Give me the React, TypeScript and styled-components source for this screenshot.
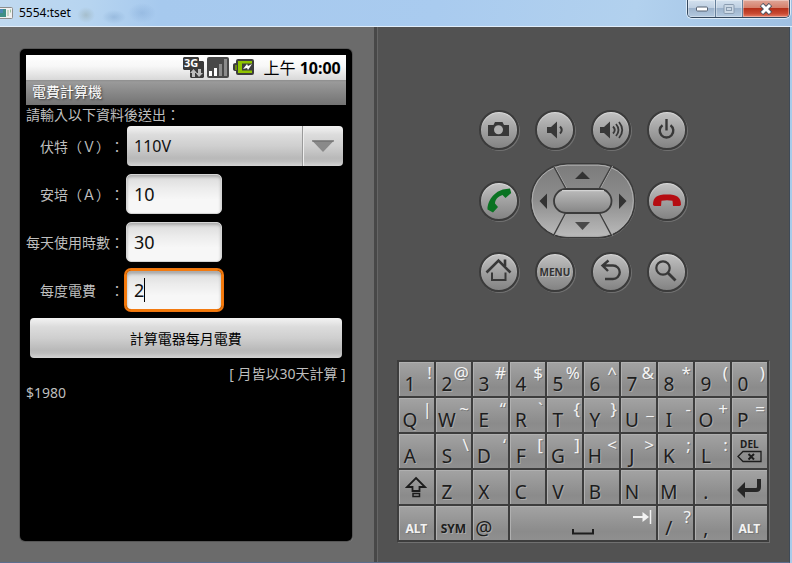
import React, { useState } from "react";
import styled, { createGlobalStyle, css } from "styled-components";

const GlobalStyle = createGlobalStyle`
  * { box-sizing: border-box; }
  body { margin: 0; background: #525252; }
  body, button, input, select {
    font-family: "Noto Sans", "Noto Sans CJK TC", sans-serif;
  }
`;

const Window = styled.div`
  min-height: 100vh;
  display: flex;
  flex-direction: column;
  background: #a9cbea;
`;

const TitleBar = styled.header`
  height: 27px;
  display: flex;
  align-items: flex-start;
  justify-content: space-between;
  border-bottom: 1px solid #e2eefa;
  background:
    radial-gradient(ellipse 9px 8px at 86px 15px, rgba(134, 150, 140, 0.35), transparent),
    radial-gradient(ellipse 12px 7px at 114px 17px, rgba(100, 140, 185, 0.3), transparent),
    radial-gradient(ellipse 14px 10px at 142px 13px, rgba(110, 150, 200, 0.3), transparent),
    linear-gradient(100deg, #c0d9f0 0, #b6d4f0 90px, #a6c9ee 160px, #a9cbef 55%, #b2d1ee 80%, #9fc0e2 100%);
`;

const TitleGroup = styled.div`
  display: flex;
  align-items: center;
  gap: 6px;
  height: 26px;
`;

const Title = styled.h1`
  margin: 0;
  font-size: 12px;
  font-weight: 400;
  line-height: 18px;
  color: #000;
`;

const Controls = styled.div`
  display: flex;
  height: 18px;
  margin-right: 2px;
  border: 1px solid #34485e;
  border-top: 0;
  border-radius: 0 0 5px 5px;
  box-shadow: 0 0 0 1px rgba(240, 248, 255, 0.75);
  overflow: hidden;
`;

const ControlButton = styled.button<{ $close?: boolean }>`
  width: ${(p) => (p.$close ? 47 : 27)}px;
  padding: 0;
  border: 0;
  border-left: 1px solid #66809b;
  display: flex;
  align-items: center;
  justify-content: center;
  background: ${(p) =>
    p.$close
      ? "linear-gradient(#e0a698 0, #d5806c 45%, #b5301a 50%, #c94a32 80%, #e8806a 100%)"
      : "linear-gradient(#d3e1ef 0, #bfd0e2 45%, #9db3cc 50%, #b3c9df 100%)"};
  box-shadow: inset 0 0 0 1px rgba(255, 255, 255, 0.35);
  &:first-child { border-left: 0; }
`;

const Body = styled.main`
  flex: 1;
  display: grid;
  grid-template-columns: 9fr 10fr;
  margin-right: 2px;
  border-bottom: 1px solid #5d6d8c;
  border-right: 1px solid #3f4a57;
`;

const ScreenPanel = styled.section`
  display: flex;
  padding: 22px 22px 21px 20px;
  background: #6b6b6b;
`;

const Bezel = styled.div`
  flex: 1;
  padding: 6px;
  background: #000;
  border-radius: 5px;
  box-shadow: 0 0 0 1px #565656, 1px 1px 0 0 #8a8a8a;
`;

const StatusBar = styled.div`
  height: 25px;
  display: flex;
  align-items: center;
  justify-content: flex-end;
  gap: 8px;
  padding-right: 5px;
  background: linear-gradient(#fff, #f7f7f7 45%, #d8d8d8);
`;

const Clock = styled.time`
  font-size: 16px;
  line-height: 24px;
  font-weight: 700;
  color: #000;
  white-space: pre;
  span { font-weight: 400; }
`;

const AppTitle = styled.h2`
  height: 25px;
  margin: 0;
  padding-left: 6px;
  font-size: 14px;
  font-weight: 400;
  line-height: 23px;
  color: #fff;
  text-shadow: 1px 1px 2px #333;
  background: linear-gradient(#8e8e8e, #9a9a9a 8%, #737373);
`;

const Form = styled.form`
  display: flex;
  flex-direction: column;
  gap: 8px;
  color: #bebebe;
  font-size: 14px;
  text-spacing-trim: space-all;
`;

const Prompt = styled.p`
  margin: 0 0 -7px;
  line-height: 20px;
`;

const Field = styled.div`
  height: 40px;
  display: grid;
  grid-template-columns: 100px 1fr;
  align-items: center;
`;

const Label = styled.label`
  padding-top: 2px;
  white-space: pre;
  line-height: 20px;
`;

const metal = css`
  background: linear-gradient(#f3f3f3 0, #dcdcdc 22%, #cfcfcf 50%, #b9b9b9 80%, #bdbdbd 88%, #d4d4d4 100%);
`;

const SelectBox = styled.div`
  display: flex;
  height: 40px;
  margin: 0 3px 0 1px;
  border-radius: 4px;
  position: relative;
  ${metal}
`;

const Select = styled.select`
  appearance: none;
  flex: 1;
  min-width: 0;
  padding: 0 48px 0 7px;
  border: 0;
  background: transparent;
  font-size: 16px;
  color: #111;
`;

const SelectArrow = styled.span`
  position: absolute;
  inset: 0 0 0 auto;
  width: 41px;
  display: flex;
  align-items: center;
  justify-content: center;
  border-left: 1px solid #9a9a9a;
  box-shadow: inset 1px 0 0 #eee;
  pointer-events: none;
`;

const InputBox = styled.div`
  position: relative;
  width: 96px;
  height: 40px;
`;

const Input = styled.input<{ $active?: boolean }>`
  width: 100%;
  height: 100%;
  padding: 0 7px;
  border: 1px solid #d4d4d4;
  border-radius: 5px;
  font-size: 18px;
  color: #111;
  outline: 0;
  caret-color: transparent;
  background: linear-gradient(#dadada, #ececec 35%, #f7f7f7 65%);
  box-shadow: inset 0 2px 3px #aaa;
  ${(p) =>
    p.$active &&
    css`
      border-color: #f27a10;
      box-shadow: inset 0 3px 3px #aaa, 0 0 0 1px #f57c08, 0 0 0 2px #ee7410;
    `}
`;

const Caret = styled.span`
  position: absolute;
  left: 18px;
  top: 8px;
  width: 1px;
  height: 24px;
  background: #000;
`;

const Submit = styled.button`
  height: 40px;
  margin: 0 4px;
  border: 0;
  border-radius: 4px;
  font-size: 14px;
  color: #000;
  ${metal}
`;

const Note = styled.p`
  margin: -2px 0 0;
  line-height: 19px;
  text-align: right;
`;

const Result = styled.output`
  display: block;
  margin-top: -8px;
  line-height: 19px;
`;

const ControlPanel = styled.section`
  display: flex;
  flex-direction: column;
  align-items: center;
  gap: 68px;
  padding: 83px 4px 20px;
  background: #525252;
  border-left: 3px solid #484848;
  box-shadow: inset 1px 0 0 #666;
`;

const Pad = styled.div`
  width: 208px;
  display: flex;
  flex-direction: column;
  gap: 13px;
`;

const PadRow = styled.div`
  display: flex;
  align-items: center;
  justify-content: space-between;
`;

const RoundButton = styled.button`
  width: 40px;
  height: 40px;
  padding: 0;
  border: 2px solid #3b3b3b;
  border-radius: 50%;
  display: flex;
  align-items: center;
  justify-content: center;
  background: linear-gradient(#c2c2c2, #a4a4a4 45%, #838383);
  box-shadow: inset 0 1px 1px #dcdcdc, 1px 1px 0 #717171;
  font-size: 10px;
  font-weight: 700;
  line-height: 12px;
  color: #333;
  svg { flex: none; display: block; }
`;

const MenuText = styled.span`
  text-shadow: 1px 1px 0 #bbb;
`;

const DPadBox = styled.div`
  position: relative;
  width: 106px;
  height: 76px;
  svg { display: block; }
`;

const DPadKeys = styled.div`
  position: absolute;
  inset: 0;
  display: grid;
  grid-template: "l u r" 1fr "l c r" 1fr "l d r" 1fr / 24px 1fr 24px;
`;

const DPadKey = styled.button<{ $area: string }>`
  grid-area: ${(p) => p.$area};
  padding: 0;
  border: 0;
  background: transparent;
`;

const Keyboard = styled.div`
  width: 100%;
  max-width: 372px;
  display: grid;
  grid-template-columns: repeat(10, 1fr);
  grid-auto-rows: 34px;
  gap: 2px;
  padding: 2px;
  background: #3d3d3d;
  box-shadow: 1px 1px 0 #707070;
`;

const KeyButton = styled.button<{ $span?: number }>`
  grid-column: span ${(p) => p.$span ?? 1};
  position: relative;
  min-width: 0;
  padding: 0;
  border: 0;
  display: flex;
  align-items: center;
  justify-content: center;
  background: linear-gradient(#a3a3a3, #8b8b8b 75%, #8f8f8f);
  box-shadow: inset 1px 1px 0 #b0b0b0;
`;

const MainGlyph = styled.span`
  position: absolute;
  left: 0;
  bottom: 0;
  width: 22px;
  display: flex;
  justify-content: center;
  font-size: 19px;
  line-height: 24px;
  color: #1d1d1d;
  text-shadow: 1px 1px 0 #aaa;
`;

const AltGlyph = styled.span`
  position: absolute;
  right: 2px;
  top: 0;
  font-size: 17px;
  line-height: 22px;
  color: #f3f3f3;
  text-shadow: 1px 1px 0 #777;
`;

const WordGlyph = styled.span<{ $light?: boolean }>`
  padding-top: 11px;
  font-size: 12px;
  font-weight: 700;
  line-height: 16px;
  color: ${(p) => (p.$light ? "#f3f3f3" : "#1d1d1d")};
  text-shadow: 1px 1px 0 ${(p) => (p.$light ? "#777" : "#aaa")};
`;

const DelStack = styled.span`
  display: flex;
  flex-direction: column;
  align-items: center;
  font-size: 10px;
  font-weight: 700;
  line-height: 11px;
  color: #1d1d1d;
`;

const TabIcon = styled.svg`
  position: absolute;
  right: 4px;
  top: 3px;
`;

const SpaceIcon = styled.svg`
  margin-top: 18px;
`;

const Icon = ({ children }: { children: React.ReactNode }) => (
  <svg width="36" height="36" viewBox="2 2 36 36" fill="none" aria-hidden="true">
    {children}
  </svg>
);

const INK = "#383838";

const DPad = () => (
  <DPadBox>
    <svg width="106" height="76" viewBox="0 0 106 76" fill="none" aria-hidden="true">
      <defs>
        <linearGradient id="ring" x1="0" y1="0" x2="0" y2="1">
          <stop offset="0" stopColor="#7b7b7b" />
          <stop offset="0.5" stopColor="#8e8e8e" />
          <stop offset="1" stopColor="#bcbcbc" />
        </linearGradient>
        <linearGradient id="pill" x1="0" y1="0" x2="0" y2="1">
          <stop offset="0" stopColor="#bdbdbd" />
          <stop offset="1" stopColor="#858585" />
        </linearGradient>
      </defs>
      <rect x="1.5" y="1.5" width="104" height="74" rx="37" stroke="#767676" />
      <rect x="0.8" y="0.8" width="104" height="73.8" rx="36.7" fill="url(#ring)" stroke="#3b3b3b" strokeWidth="1.6" />
      <rect x="2.2" y="2.2" width="101" height="71" rx="35" stroke="#b0b0b0" />
      <path d="M24.5 3 36.5 25M82.5 3 70.5 25M36.5 50 24.5 72.5M70.5 50 82.5 72.5" stroke="#b0b0b0" />
      <path d="M23.5 3 35.5 25M81.5 3 69.5 25M35.5 50 23.5 72.5M69.5 50 81.5 72.5" stroke="#3f3f3f" strokeWidth="1.4" />
      <rect x="24" y="26" width="57.5" height="24" rx="12" fill="url(#pill)" stroke="#3b3b3b" strokeWidth="1.8" />
      <path d="M32 27.7H74" stroke="#dadada" />
      <path d="M45 16 52.5 8.5 60 16ZM17 30.5 9.5 38 17 46ZM89 30.5 96.5 38 89 46Z" fill="#333" />
      <path d="M45 59H60L52.5 67Z" fill="#4a4a4a" />
    </svg>
    <DPadKeys>
      <DPadKey $area="u" aria-label="Up" />
      <DPadKey $area="l" aria-label="Left" />
      <DPadKey $area="c" aria-label="Select" />
      <DPadKey $area="r" aria-label="Right" />
      <DPadKey $area="d" aria-label="Down" />
    </DPadKeys>
  </DPadBox>
);

type KeyDef = [string, string?];

const KEY_ROWS: KeyDef[][] = [
  [["1", "!"], ["2", "@"], ["3", "#"], ["4", "$"], ["5", "%"], ["6", "^"], ["7", "&"], ["8", "*"], ["9", "("], ["0", ")"]],
  [["Q", "|"], ["W", "~"], ["E", "“"], ["R", "`"], ["T", "{"], ["Y", "}"], ["U", "_"], ["I", "-"], ["O", "+"], ["P", "="]],
  [["A"], ["S", "\\"], ["D", "‘"], ["F", "["], ["G", "]"], ["H", "<"], ["J", ">"], ["K", ";"], ["L", ":"]],
  [["Z"], ["X"], ["C"], ["V"], ["B"], ["N"], ["M"], ["."]],
];

const Key = ({ def: [main, alt] }: { def: KeyDef }) => (
  <KeyButton>
    <MainGlyph>{main}</MainGlyph>
    {alt && <AltGlyph>{alt}</AltGlyph>}
  </KeyButton>
);

const keysOf = (row: number) => KEY_ROWS[row].map((def) => <Key key={def[0]} def={def} />);

const StatusIcons = () => (
  <svg width="72" height="22" viewBox="0 0 72 22" overflow="visible" aria-label="3G, signal, battery" role="img">
    <path d="M1 0H15L16 1V4H20L21 5V20L20 21H8L7 20V13H1L0 12V1Z" fill="#3a3a3a" />
    <text x="1" y="10" fontSize="11" fontWeight="700" fill="#fff">3G</text>
    <path d="M10.5 12 14 16H12V20H9V16H7ZM16 20 12.8 16H15V12H18V16H20Z" fill="#bdbdbd" />
    <rect x="24" y="0" width="22" height="21" rx="2" fill="#484848" />
    <path d="M26 14h3v5h-3ZM31 11h3v8h-3Z" fill="#fff" />
    <path d="M36 7h3v12h-3ZM41 2h3v17h-3Z" fill="#8b8b8b" />
    <path d="M55 2H69Q71 2 71 4V16Q71 18 69 18H55Q53 18 53 16V14Q50 14 50 12V8Q50 6 53 6V4Q53 2 55 2Z" fill="#3d3d3d" />
    <path d="M55 4H69V6.500H59V13.500H69V16H55Z" fill="#8fc400" />
    <path d="M52 8h2v5h-2Z" fill="#6a8a10" />
    <path d="M60 12 64 7 65 9 69 7 65 13 64 11Z" fill="#fff" />
  </svg>
);

export default function App() {
  const [volts, setVolts] = useState("110V");
  const [amps, setAmps] = useState("10");
  const [hours, setHours] = useState("30");
  const [rate, setRate] = useState("2");

  return (
    <>
      <GlobalStyle />
      <Window>
        <TitleBar>
          <TitleGroup>
            <svg width="13" height="12" viewBox="0 0 13 12" aria-hidden="true">
              <rect x="-3" y="0.5" width="15.5" height="11" rx="1" fill="#f1f1f1" stroke="#8d8d8d" />
              <rect x="0" y="2" width="6" height="8" fill="#3f8f86" />
              <rect x="0" y="2" width="3" height="4" fill="#4c88b5" />
              <path d="M8 3v6M10.5 2.5v3" stroke="#9ac09a" />
            </svg>
            <Title>5554:tset</Title>
          </TitleGroup>
          <Controls>
            <ControlButton aria-label="Minimize">
              <svg width="14" height="6" viewBox="0 0 14 6"><rect x="1.5" y="1" width="11" height="4" rx="1" fill="#fff" stroke="#566273" /></svg>
            </ControlButton>
            <ControlButton aria-label="Maximize">
              <svg width="12" height="10" viewBox="0 0 12 10" fill="none" stroke="#8a9cb0"><rect x="1" y="0.5" width="10" height="9" rx="1" fill="#cbd8e5" /><rect x="3.5" y="3.5" width="5" height="3" /></svg>
            </ControlButton>
            <ControlButton aria-label="Close" $close>
              <svg width="14" height="12" viewBox="0 0 14 12"><path d="M2.500 1.500 11.500 10.500M11.500 1.500 2.500 10.500" stroke="#4b5563" strokeWidth="4.8" /><path d="M3 2 11 10M11 2 3 10" stroke="#fff" strokeWidth="3" /></svg>
            </ControlButton>
          </Controls>
        </TitleBar>
        <Body>
          <ScreenPanel>
            <Bezel>
              <StatusBar>
                <StatusIcons />
                <Clock><span>上午 </span>10:00</Clock>
              </StatusBar>
              <AppTitle>電費計算機</AppTitle>
              <Form onSubmit={(e) => e.preventDefault()}>
                <Prompt>請輸入以下資料後送出：</Prompt>
                <Field>
                  <Label htmlFor="volts">{"　伏特（Ｖ）："}</Label>
                  <SelectBox>
                    <Select id="volts" value={volts} onChange={(e) => setVolts(e.target.value)}>
                      <option>110V</option>
                      <option>220V</option>
                    </Select>
                    <SelectArrow>
                      <svg width="24" height="12" viewBox="0 0 24 12" aria-hidden="true">
                        <path d="M1 0.5H23L12 12Z" fill="#8a8a8a" />
                        <path d="M1 1H23" stroke="#666" />
                      </svg>
                    </SelectArrow>
                  </SelectBox>
                </Field>
                <Field>
                  <Label htmlFor="amps">{"　安培（Ａ）："}</Label>
                  <InputBox><Input id="amps" value={amps} onChange={(e) => setAmps(e.target.value)} /></InputBox>
                </Field>
                <Field>
                  <Label htmlFor="hours">每天使用時數：</Label>
                  <InputBox><Input id="hours" value={hours} onChange={(e) => setHours(e.target.value)} /></InputBox>
                </Field>
                <Field>
                  <Label htmlFor="rate">{"　每度電費　："}</Label>
                  <InputBox>
                    <Input id="rate" $active value={rate} onChange={(e) => setRate(e.target.value)} />
                    <Caret />
                  </InputBox>
                </Field>
                <Submit type="submit">計算電器每月電費</Submit>
                <Note>[ 月皆以30天計算 ]</Note>
                <Result>$1980</Result>
              </Form>
            </Bezel>
          </ScreenPanel>
          <ControlPanel>
            <Pad>
              <PadRow>
                <RoundButton aria-label="Camera">
                  <Icon>
                    <path d="M9 15H14.5L16 12H23.5L25 15H30V26H9Z" fill={INK} />
                    <circle cx="19.5" cy="19.7" r="4.5" fill="#b0b0b0" />
                  </Icon>
                </RoundButton>
                <RoundButton aria-label="Volume down">
                  <Icon>
                    <path d="M12 17H16L22 11.5V28.5L16 23H12Z" fill={INK} />
                    <path d="M25 16.5Q28.5 20 25 23.5" stroke={INK} strokeWidth="2" />
                  </Icon>
                </RoundButton>
                <RoundButton aria-label="Volume up">
                  <Icon>
                    <path d="M9 17H13L19 11.5V28.5L13 23H9Z" fill={INK} />
                    <path d="M22 16.5Q25.500 20 22 23.5M25 14Q30 20 25 26M28 12Q34.5 20 28 28" stroke={INK} strokeWidth="1.8" />
                  </Icon>
                </RoundButton>
                <RoundButton aria-label="Power">
                  <Icon>
                    <path d="M15.5 15.2A6.8 6.8 0 1 0 23.5 15.2" stroke={INK} strokeWidth="2.4" />
                    <path d="M19.5 9V20.5" stroke={INK} strokeWidth="2.4" />
                  </Icon>
                </RoundButton>
              </PadRow>
              <PadRow>
                <RoundButton aria-label="Call">
                  <Icon>
                    <path d="M8.5 28.5C8.5 18 17.5 8.5 27.5 8L31 7.5L32.2 12L26.5 17L23.5 14C18.5 15.5 16 19 16 22.5L19 26L14 31.5Z" fill="#0a7322" />
                  </Icon>
                </RoundButton>
                <DPad />
                <RoundButton aria-label="End call">
                  <Icon>
                    <path d="M6 24C6 16 10 13.5 20 13.5S34 16 34 24L32.5 25H26L25.5 19.8C22 19 18 19 14.5 19.8L14 25H7.5Z" fill="#b50d12" />
                  </Icon>
                </RoundButton>
              </PadRow>
              <PadRow>
                <RoundButton aria-label="Home">
                  <Icon>
                    <path d="M7.5 20.5 19.5 8.5 31.500 20.500" stroke={INK} strokeWidth="2.6" />
                    <path d="M26 7.500V14" stroke={INK} strokeWidth="2.6" />
                    <path d="M13 20.500V28H26.500V20.500" stroke={INK} strokeWidth="2" />
                  </Icon>
                </RoundButton>
                <RoundButton><MenuText>MENU</MenuText></RoundButton>
                <RoundButton aria-label="Back">
                  <Icon>
                    <path d="M17.5 8.5 11.5 13.5 17 19M12 13.5H22A6.7 6.7 0 0 1 22 27H14" stroke={INK} strokeWidth="2.4" />
                  </Icon>
                </RoundButton>
                <RoundButton aria-label="Search">
                  <Icon>
                    <circle cx="16" cy="16" r="6.7" stroke={INK} strokeWidth="2.2" />
                    <path d="M20.5 20.5 28.5 28.5" stroke={INK} strokeWidth="2.8" />
                  </Icon>
                </RoundButton>
              </PadRow>
            </Pad>
            <Keyboard>
              {keysOf(0)}
              {keysOf(1)}
              {keysOf(2)}
              <KeyButton>
                <DelStack>
                  DEL
                  <svg width="25" height="13" viewBox="0 0 25 13" fill="none" stroke="#1d1d1d" aria-hidden="true">
                    <path d="M1 6.5 6 1.5H24V11.5H6Z" strokeWidth="1.3" />
                    <path d="M11.5 4 17 9.5M17 4 11.5 9.5" strokeWidth="2" />
                  </svg>
                </DelStack>
              </KeyButton>
              <KeyButton aria-label="Shift">
                <svg width="22" height="22" viewBox="0 0 22 22" fill="none" stroke="#1d1d1d" strokeWidth="1.8" aria-hidden="true">
                  <path d="M11 2 20 11H14.5V15H7.5V11H2Z" />
                  <path d="M8 17.5H14.5V20.5H8Z" strokeWidth="1.5" />
                </svg>
              </KeyButton>
              {keysOf(3)}
              <KeyButton aria-label="Enter">
                <svg width="26" height="22" viewBox="0 0 26 22" aria-hidden="true">
                  <path d="M1 14 9 6V22Z" fill="#262626" />
                  <path d="M8 14H20Q23 14 23 11V3" fill="none" stroke="#262626" strokeWidth="4" />
                </svg>
              </KeyButton>
              <KeyButton><WordGlyph $light>ALT</WordGlyph></KeyButton>
              <KeyButton><WordGlyph>SYM</WordGlyph></KeyButton>
              <Key def={["@"]} />
              <KeyButton $span={4} aria-label="Space">
                <SpaceIcon width="22" height="6" viewBox="0 0 22 6" fill="none" aria-hidden="true">
                  <path d="M1 0V4.5H21V0" stroke="#1d1d1d" strokeWidth="2" />
                </SpaceIcon>
                <TabIcon width="20" height="16" viewBox="0 0 20 16" aria-hidden="true">
                  <path d="M1 8H13" stroke="#f3f3f3" strokeWidth="2" />
                  <path d="M10.5 3 17 8 10.5 13Z" fill="#f3f3f3" />
                  <path d="M18.5 1V15" stroke="#f3f3f3" strokeWidth="1.5" />
                </TabIcon>
              </KeyButton>
              <Key def={["/", "?"]} />
              <Key def={[","]} />
              <KeyButton><WordGlyph $light>ALT</WordGlyph></KeyButton>
            </Keyboard>
          </ControlPanel>
        </Body>
      </Window>
    </>
  );
}
